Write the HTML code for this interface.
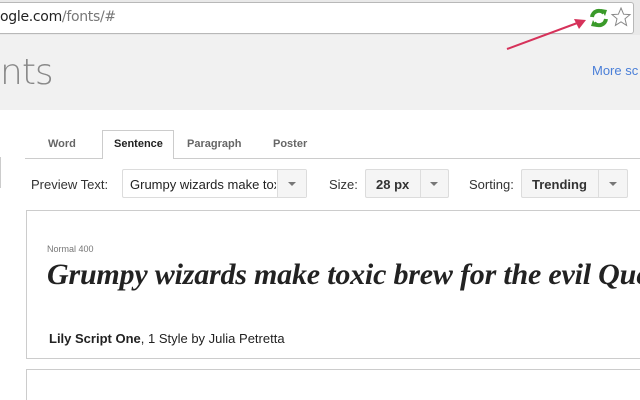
<!DOCTYPE html>
<html><head><style>
*{margin:0;padding:0;box-sizing:border-box}
html,body{width:640px;height:400px;overflow:hidden;background:#fff}
body{font-family:"Liberation Sans",Arial,sans-serif}
#w{position:relative;width:640px;height:400px;overflow:hidden}
.abs{position:absolute}
.omni{left:0;top:2px;width:634px;height:32px;border:1px solid #b8b8b8;border-left:none;border-radius:0 3px 3px 0;background:#fff}
.hdr{left:0;top:35px;width:640px;height:75px;background:#f1f1f1}
.tab{top:138px;font-size:11px;font-weight:bold;color:#666}
.box{border:1px solid #dcdcdc;border-radius:2px;background:#f5f5f5;height:29px}
.lbl{font-size:13px;color:#333;top:177px}
.arr{width:0;height:0;border-left:4px solid transparent;border-right:4px solid transparent;border-top:4px solid #777}
</style></head><body><div id="w">
<div class="abs" style="left:0;top:0;width:640px;height:35px;background:#e9e9e9"></div>
<div class="abs omni"></div>
<div class="abs" style="left:0;top:9px;font-size:14px;color:#222;font-family:'DejaVu Sans',sans-serif;letter-spacing:-0.3px">ogle.com<span style="color:#777">/fonts/#</span></div>
<svg class="abs" style="left:588px;top:7px" width="22" height="22" viewBox="0 0 22 22">
<path d="M4 10 A7 7 0 0 1 16 6" stroke="#3a9a2a" stroke-width="4" fill="none"/>
<path d="M13 2 L19 3 L17 9 Z" fill="#3a9a2a"/>
<path d="M18 12 A7 7 0 0 1 6 16" stroke="#3a9a2a" stroke-width="4" fill="none"/>
<path d="M9 20 L3 19 L5 13 Z" fill="#3a9a2a"/>
</svg>
<svg class="abs" style="left:610px;top:6px" width="22" height="22" viewBox="0 0 22 22"><path d="M11 2 L13.6 8.2 L20 8.6 L15 12.8 L16.6 19.4 L11 15.8 L5.4 19.4 L7 12.8 L2 8.6 L8.4 8.2 Z" fill="#fff" stroke="#888" stroke-width="1"/></svg>
<div class="abs hdr"></div>
<svg class="abs" style="left:500px;top:15px" width="90" height="40"><line x1="7" y1="34" x2="80" y2="7" stroke="#d6325a" stroke-width="2"/><path d="M86 5 L74 4 L79 14 Z" fill="#d6325a"/></svg>
<div class="abs" style="left:0;top:52px;font-size:36px;color:#888;font-family:'DejaVu Sans',sans-serif;font-weight:200;letter-spacing:-1px">nts</div>
<div class="abs" style="left:592px;top:63px;width:48px;overflow:hidden;font-size:13px;color:#4a7fd8;white-space:nowrap">More sc</div>
<div class="abs" style="left:0;top:157px;width:1px;height:31px;background:#ccc"></div>
<div class="abs" style="left:25px;top:158px;width:615px;height:1px;background:#ccc"></div>
<div class="abs" style="left:102px;top:130px;width:72px;height:29px;border:1px solid #ccc;border-bottom:none;background:#fff"></div>
<div class="abs tab" style="left:48px">Word</div>
<div class="abs tab" style="left:114px;color:#222">Sentence</div>
<div class="abs tab" style="left:187px">Paragraph</div>
<div class="abs tab" style="left:273px">Poster</div>
<div class="abs lbl" style="left:31px">Preview Text:</div>
<div class="abs box" style="left:122px;top:169px;width:185px;background:#fff"></div>
<div class="abs" style="left:277px;top:170px;width:29px;height:27px;background:#f5f5f5;border-left:1px solid #ddd"></div>
<div class="abs" style="left:130px;top:177px;font-size:13px;color:#222;width:146px;overflow:hidden;white-space:nowrap">Grumpy wizards make toxic</div>
<div class="abs arr" style="left:288px;top:182px"></div>
<div class="abs lbl" style="left:329px">Size:</div>
<div class="abs box" style="left:365px;top:169px;width:84px"></div>
<div class="abs" style="left:420px;top:170px;width:1px;height:27px;background:#ddd"></div>
<div class="abs" style="left:376px;top:177px;font-size:13px;font-weight:bold;color:#333">28 px</div>
<div class="abs arr" style="left:430px;top:182px"></div>
<div class="abs lbl" style="left:469px">Sorting:</div>
<div class="abs box" style="left:521px;top:169px;width:107px"></div>
<div class="abs" style="left:598px;top:170px;width:1px;height:27px;background:#ddd"></div>
<div class="abs" style="left:532px;top:177px;font-size:13px;font-weight:bold;color:#333">Trending</div>
<div class="abs arr" style="left:609px;top:182px"></div>
<div class="abs" style="left:26px;top:210px;width:614px;height:149px;border:1px solid #ccc;border-right:none"></div>
<div class="abs" style="left:47px;top:244px;font-size:9px;color:#777">Normal 400</div>
<div class="abs" style="left:47px;top:258px;width:593px;overflow:hidden;font-size:30px;font-weight:bold;font-style:italic;color:#222;font-family:'Liberation Serif',serif;white-space:nowrap;letter-spacing:-0.2px">Grumpy wizards make toxic brew for the evil Queen</div>
<div class="abs" style="left:49px;top:331px;font-size:13px;color:#222"><b>Lily Script One</b>, 1 Style by Julia Petretta</div>
<div class="abs" style="left:26px;top:369px;width:614px;height:31px;border:1px solid #ccc;border-right:none;border-bottom:none"></div>
</div></body></html>
